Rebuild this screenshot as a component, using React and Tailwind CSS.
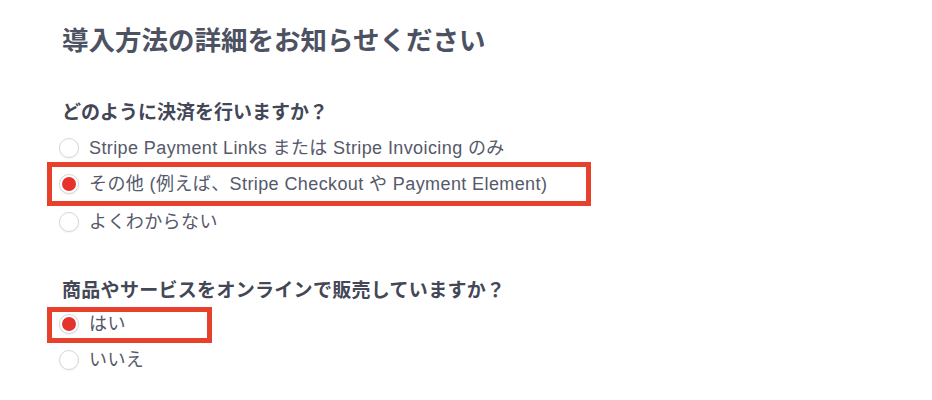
import React from "react";

const FONT = {
  fontFamily: '"Liberation Sans", "Noto Sans CJK JP", sans-serif',
};

function Radio({ checked }) {
  return checked ? (
    <span className="flex h-[20px] w-[20px] shrink-0 items-center justify-center rounded-full border border-[#d3d7df] bg-white shadow-[0_1px_2px_rgba(0,0,0,0.08)]">
      <span className="h-[14px] w-[14px] rounded-full bg-[#e5322d]" />
    </span>
  ) : (
    <span className="h-[20px] w-[20px] shrink-0 rounded-full border border-[#d3d7df] bg-white shadow-[0_1px_2px_rgba(0,0,0,0.06)]" />
  );
}

function Option({ label, checked, box }) {
  return (
    <div className="relative flex h-[36px] items-center gap-[10px] pl-[59px]">
      <Radio checked={checked} />
      <span className="text-[18px] tracking-[0.4px] text-[#55596a]">{label}</span>
      {box}
    </div>
  );
}

export default function App() {
  return (
    <div className="h-[400px] w-[932px] bg-white" style={FONT}>
      <div className="pt-[24px]">
        <h1 className="pl-[62px] text-[26.5px] font-bold leading-[34px] text-[#4d5262]">
          導入方法の詳細をお知らせください
        </h1>
        <h2 className="mt-[43px] pl-[62px] text-[19px] font-bold leading-[24px] text-[#434756]">
          どのように決済を行いますか？
        </h2>
        <div className="mt-[5px] flex flex-col">
          <Option label="Stripe Payment Links または Stripe Invoicing のみ" />
          <Option
            label="その他 (例えば、Stripe Checkout や Payment Element)"
            checked
            box={
              <span className="pointer-events-none absolute left-[47px] top-[-4px] h-[44px] w-[544px] border-[5px] border-[#e8412b]" />
            }
          />
          <div className="mt-[2px]">
            <Option label="よくわからない" />
          </div>
        </div>
        <h2 className="mt-[39px] pl-[62px] text-[19px] font-bold tracking-[0.3px] leading-[24px] text-[#434756]">
          商品やサービスをオンラインで販売していますか？
        </h2>
        <div className="mt-[3px] flex flex-col">
          <Option
            label="はい"
            checked
            box={
              <span className="pointer-events-none absolute left-[47px] top-[1px] h-[36px] w-[165px] border-[5px] border-[#e8412b]" />
            }
          />
          <Option label="いいえ" />
        </div>
      </div>
    </div>
  );
}
